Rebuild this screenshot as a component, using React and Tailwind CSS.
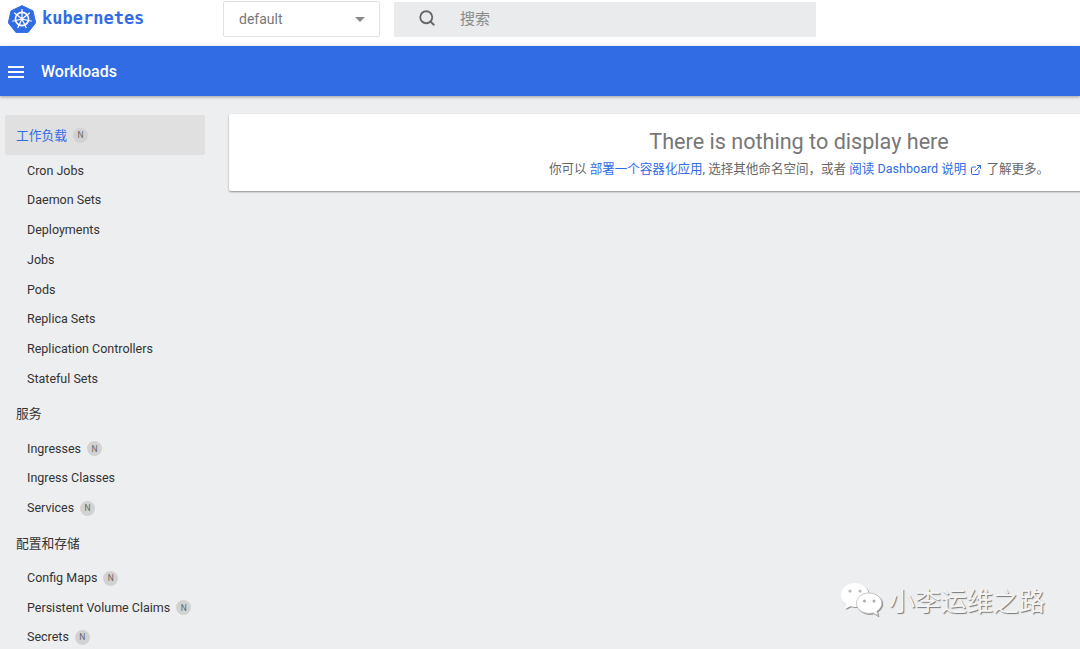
import { ExternalLink, Search } from 'lucide-react';

const SANS = 'font-["Roboto","Noto_Sans_CJK_SC",sans-serif]';

function KubeLogo() {
    const spokes = [0, 51.4, 102.8, 154.3, 205.7, 257.1, 308.6];
    return (
        <svg width="28" height="28" viewBox="0 0 28 28" className="shrink-0">
            <path d="M14 .6 25 5.900 27.700 17.800 20.100 27.400H7.900L.3 17.800 3 5.900Z" fill="#326ce5" stroke="#326ce5" strokeLinejoin="round" />
            <g stroke="#fff" fill="none">
                <circle cx="14" cy="14" r="6.600" strokeWidth="1.600" />
                <circle cx="14" cy="14" r="1.400" fill="#fff" stroke="none" />
                {spokes.map((a) => (
                    <line key={a} x1="14" y1="14" x2="14" y2="4" strokeWidth="1.200" transform={`rotate(${a} 14 14)`} />
                ))}
            </g>
        </svg>
    );
}

function Badge() {
    return (
        <span className="ml-[6px] w-[15px] h-[15px] rounded-full bg-[#d2d2d2] text-[#666] text-[8.5px] leading-none flex items-center justify-center">
            N
        </span>
    );
}

function Row({ label, badge }) {
    return (
        <div className="h-[29.75px] pl-[27px] flex items-center text-[12.5px] text-[#333]">
            <span>{label}</span>
            {badge && <Badge />}
        </div>
    );
}

function Section({ label }) {
    return <div className="h-10 pl-[16px] flex items-center text-[12.75px] text-[#333]">{label}</div>;
}

function WeChat() {
    return (
        <svg width="44" height="36" viewBox="0 0 44 36" className="drop-shadow-[1px_1px_0_#8f8f8f]">
            <path d="M15 1C7 1 1 6.500 1 13c0 3.800 2 7 5.200 9.200L5 27l5.500-2.800c1.500.4 3 .7 4.500.7 7.500 0 14-5.300 14-12S22.500 1 15 1Z" fill="#fff" />
            <path d="M29 11c-7 0-12.500 4.500-12.500 10.200S22 31.400 29 31.400c1.400 0 2.700-.2 4-.6l5 3-1.200-4.600c3-1.900 5-4.800 5-8C41.800 15.500 36 11 29 11Z" fill="#fff" stroke="#bdbdbd" strokeWidth=".8" />
            <circle cx="10" cy="9" r="1.600" fill="#bbb" />
            <circle cx="20" cy="9" r="1.600" fill="#bbb" />
            <circle cx="24.500" cy="19" r="1.500" fill="#aaa" />
            <circle cx="34" cy="19" r="1.500" fill="#aaa" />
        </svg>
    );
}

export default function App() {
    return (
        <div className={`relative h-[649px] overflow-hidden bg-[#edeef0] ${SANS}`}>
            {/* Cabecera */}
            <div className="h-[46px] bg-white flex items-start">
                <div className="w-[223px] h-[38px] pl-[8px] flex items-center gap-[6px]">
                    <KubeLogo />
                    <span className="font-['DejaVu_Sans_Mono',monospace] font-bold text-[17px] text-[#326ce5]">kubernetes</span>
                </div>
                <div className="w-[157px] h-[36px] mt-[1px] pl-[15px] pr-[14px] bg-white border border-[#e2e2e2] rounded-[2px] flex items-center justify-between text-[14px] text-[#777]">
                    <span>default</span>
                    <span className="w-0 h-0 border-x-[5px] border-x-transparent border-t-[5px] border-t-[#8a8a8a]"></span>
                </div>
                <div className="ml-[14px] w-[422px] h-[35px] mt-[2px] bg-[#e9ebec] flex items-center text-[15px] text-[#8a8a8a]">
                    <Search size={18} strokeWidth={2.4} className="ml-[24px] -mt-[3px] text-[#666]" />
                    <span className="ml-[24px]">搜索</span>
                </div>
            </div>

            {/* Barra azul */}
            <div className="h-[50px] pt-[2px] bg-[#326ce5] shadow-[0_1px_3px_rgba(0,0,0,0.35)] flex items-center text-white">
                <div className="ml-[8px] w-4 flex flex-col gap-[3px]">
                    <span className="h-[2px] bg-white"></span>
                    <span className="h-[2px] bg-white"></span>
                    <span className="h-[2px] bg-white"></span>
                </div>
                <span className="ml-[17px] text-[16px] font-medium">Workloads</span>
            </div>

            <div className="flex pt-[19px]">
                {/* Menú lateral */}
                <div className="w-[200px] ml-[5px] shrink-0">
                    <div className="h-10 pt-[1px] pl-[11px] bg-[#e0e0e0] rounded-[2px] flex items-center text-[12.75px] text-[#326ce5]">
                        <span>工作负载</span>
                        <Badge />
                    </div>
                    <div className="-ml-[5px] pt-[1px] whitespace-nowrap">
                        <Row label="Cron Jobs" />
                        <Row label="Daemon Sets" />
                        <Row label="Deployments" />
                        <Row label="Jobs" />
                        <Row label="Pods" />
                        <Row label="Replica Sets" />
                        <Row label="Replication Controllers" />
                        <Row label="Stateful Sets" />
                        <Section label="服务" />
                        <Row label="Ingresses" badge />
                        <Row label="Ingress Classes" />
                        <Row label="Services" badge />
                        <Section label="配置和存储" />
                        <Row label="Config Maps" badge />
                        <Row label="Persistent Volume Claims" badge />
                        <Row label="Secrets" badge />
                    </div>
                </div>

                {/* Contenido: la tarjeta sigue más allá del borde derecho */}
                <div className="ml-[24px] -mt-[1px] w-[1140px] shrink-0 h-[77px] bg-white rounded-l-[2px] shadow-[0_1px_2px_rgba(0,0,0,0.4)] flex flex-col items-center pt-[14px]">
                    <div className="text-[21.6px] leading-[28px] text-[#777]">There is nothing to display here</div>
                    <div className="mt-[4px] text-[12.55px] leading-[18px] text-[#666] flex items-center">
                        <span>你可以&nbsp;</span>
                        <span className="text-[#326ce5]">部署一个容器化应用</span>
                        <span>, 选择其他命名空间，或者&nbsp;</span>
                        <span className="text-[#326ce5]">阅读 Dashboard 说明</span>
                        <ExternalLink size={12} className="mx-[4px] mt-[2px] text-[#326ce5]" />
                        <span>了解更多。</span>
                    </div>
                </div>
            </div>

            {/* Marca de agua */}
            <div className="absolute left-[840px] top-[582px] flex items-center gap-[5px]">
                <WeChat />
                <span className="text-[26px] leading-none text-[#f4f4f4] [text-shadow:1px_1px_1px_#777] font-['Noto_Sans_CJK_SC',sans-serif]">小李运维之路</span>
            </div>
        </div>
    );
}
